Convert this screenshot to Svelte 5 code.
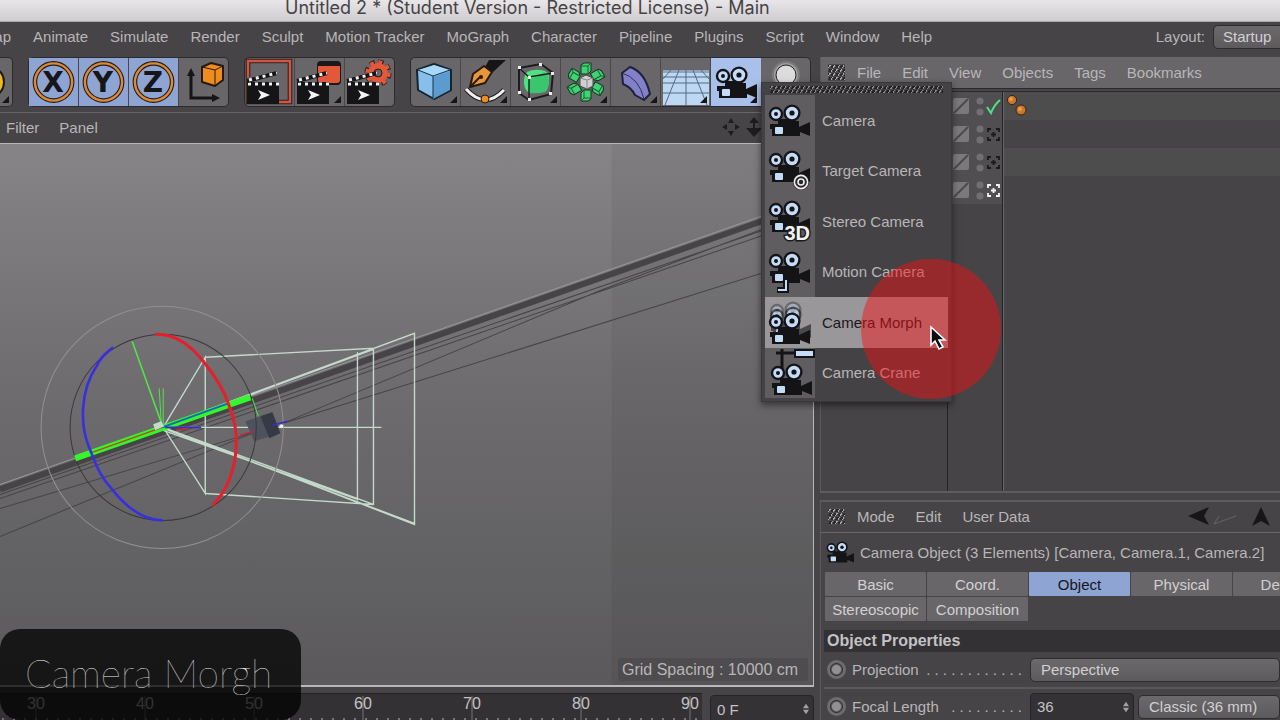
<script>
    const menus = [
        "Snap",
        "Animate",
        "Simulate",
        "Render",
        "Sculpt",
        "Motion Tracker",
        "MoGraph",
        "Character",
        "Pipeline",
        "Plugins",
        "Script",
        "Window",
        "Help",
    ];
    const cameras = [
        { name: "Camera", kind: "plain" },
        { name: "Target Camera", kind: "target" },
        { name: "Stereo Camera", kind: "stereo" },
        { name: "Motion Camera", kind: "motion" },
        { name: "Camera Morph", kind: "morph" },
        { name: "Camera Crane", kind: "crane" },
    ];
    const tabs = [
        "Basic",
        "Coord.",
        "Object",
        "Physical",
        "Details",
        "Stereoscopic",
        "Composition",
    ];
    const rows = ["check", "off", "off", "on"];
    const frames = [30, 40, 50, 60, 70, 80, 90];
    const ticks = Array.from({ length: 64 }, (_, i) => 3 + i * 11);
    const petals = [0, 60, 120, 180, 240, 300];

    let hovered = $state("Camera Morph");
    let activeTab = $state("Object");
    let locked = $state({ X: true, Y: true, Z: true });
    let frame = $state("0 F");
    let focal = $state("36");
</script>

{#snippet reels()}
    <circle cx="8" cy="10" r="6" fill="#c4dcf8" stroke="#141416" stroke-width="2.4" />
    <circle cx="8" cy="10" r="2" fill="#141416" />
    <circle cx="24" cy="9" r="7.4" fill="#c4dcf8" stroke="#141416" stroke-width="2.4" />
    <circle cx="24" cy="9" r="2.6" fill="#141416" />
{/snippet}

{#snippet cameraBody()}
    <path d="M10 15h11v2h10v6l11-5v14l-10-4v4H4v-7H2v-5h8z" fill="#141416" />
    <rect x="7" y="23" width="8" height="7" rx="1" fill="#c4dcf8" />
{/snippet}

{#snippet clapper()}
    <path d="M2 28h32v18H2z" fill="#151517" />
    <path d="M2 26h32" stroke="#151517" stroke-width="4" />
    <path d="M3 26h31" stroke="#f2f2f2" stroke-width="3" stroke-dasharray="3 4" />
    <path d="M2 23l30-8" stroke="#151517" stroke-width="4" />
    <path d="M4 22l28-7" stroke="#f2f2f2" stroke-width="3" stroke-dasharray="3 4" />
    <path d="M13 32l12 5-12 5 3-5z" fill="#f4f4f4" />
{/snippet}

{#snippet corner()}
    <path d="M46 38v7h-7z" fill="#161617" />
{/snippet}

{#snippet spinner()}
    <svg class="spin" viewBox="0 0 8 14" aria-hidden="true">
        <path d="M4 0l4 6H0zM4 14l4-6H0z" fill="#a3a1a3" />
    </svg>
{/snippet}

<div class="app">
    <header class="titlebar">Untitled 2 * (Student Version - Restricted License) - Main</header>

    <nav class="menubar">
        <div class="menus">
            {#each menus as menu}
                <button>{menu}</button>
            {/each}
        </div>
        <label for="layout">Layout:</label>
        <select id="layout">
            <option>Startup</option>
        </select>
    </nav>

    <div class="workspace">
        <main>
            <div class="toolbar">
                <div class="group first">
                    <button aria-label="Recent tool">
                        <svg viewBox="0 0 50 48">
                            <circle cx="25" cy="24" r="16" fill="#f4b81c" stroke="#1b1b1b" stroke-width="2" />
                            {@render corner()}
                        </svg>
                    </button>
                </div>
                <div class="group">
                    {#each ["X", "Y", "Z"] as axis}
                        <button
                            class:active={locked[axis]}
                            aria-label="{axis} axis"
                            onclick={() => (locked[axis] = !locked[axis])}
                        >
                            <svg viewBox="0 0 50 48">
                                <circle cx="24.5" cy="24" r="18.6" fill="none" stroke="#221d1c" stroke-width="4.6" />
                                <circle cx="24.5" cy="24" r="18.6" fill="none" stroke="#dd8836" stroke-width="2.4" />
                                <text x="24" y="34" text-anchor="middle" class="axis">{axis}</text>
                            </svg>
                        </button>
                    {/each}
                    <button aria-label="Coordinate system">
                        <svg viewBox="0 0 50 48">
                            <path d="M12 16v24h24" fill="none" stroke="#151517" stroke-width="3" />
                            <path d="M12 10l4 8H8zM41 40l-8-4v8z" fill="#151517" />
                            <path d="M23 9l9-4 12 3v14l-8 6-13-4z" fill="#f08c1c" stroke="#241a10" stroke-width="2" stroke-linejoin="round" />
                            <path d="M23 9l13 3 8-4M36 12v16" fill="none" stroke="#241a10" />
                        </svg>
                    </button>
                </div>
                <div class="group">
                    <button aria-label="Render view">
                        <svg viewBox="0 0 50 48">
                            <path d="M3 3h42v41H3z" fill="none" stroke="#37201d" stroke-width="4.6" />
                            <path d="M3 3h42v41H3z" fill="none" stroke="#cf5640" stroke-width="2.4" />
                            <path d="M2 19h32v26H2z" fill="#686668" />
                            {@render clapper()}
                        </svg>
                    </button>
                    <button aria-label="Render to picture viewer">
                        <svg viewBox="0 0 50 48">
                            <rect x="22" y="3" width="24" height="24" rx="4" fill="#1b191a" />
                            <path d="M23 8h22v14q0 3-3 3H26q-3 0-3-3z" fill="#e4583a" />
                            {@render clapper()}
                            {@render corner()}
                        </svg>
                    </button>
                    <button aria-label="Render settings">
                        <svg viewBox="0 0 50 48">
                            <circle cx="33" cy="15" r="11" fill="none" stroke="#2a1a17" stroke-width="5" stroke-dasharray="5 3.64" />
                            <circle cx="33" cy="15" r="11" fill="none" stroke="#e4583a" stroke-width="3.4" stroke-dasharray="4 4.64" />
                            <circle cx="33" cy="15" r="7" fill="none" stroke="#e4583a" stroke-width="6" />
                            <circle cx="33" cy="15" r="4" fill="none" stroke="#2a1a17" />
                            {@render clapper()}
                        </svg>
                    </button>
                </div>
                <div class="group">
                    <button aria-label="Cube">
                        <svg viewBox="0 0 50 48">
                            <path d="M6 12l17-6 17 6v20l-17 9-16-9z" fill="#86bfec" stroke="#17232d" stroke-width="2" stroke-linejoin="round" />
                            <path d="M22 19l17-6v19l-17 9z" fill="#5b9bd0" />
                            <path d="M7 12l16-5 16 5-17 6z" fill="#a6d8fa" />
                            <path d="M7 12l15 6 17-6M22 18v22" fill="none" stroke="#1c3040" />
                            {@render corner()}
                        </svg>
                    </button>
                    <button aria-label="Pen">
                        <svg viewBox="0 0 50 48">
                            <path d="M5 31q19 21 38 1" fill="none" stroke="#1c1c1c" stroke-width="5" />
                            <path d="M5 31q19 21 38 1" fill="none" stroke="#f1f1f1" stroke-width="3" />
                            <path d="M28 2h17L32 14l-8-5z" fill="#171516" />
                            <path d="M9 29l3-13 11-8 8 6-7 11z" fill="#e9953a" stroke="#241a10" stroke-width="2" stroke-linejoin="round" />
                            <path d="M9 29l10-10" stroke="#241a10" stroke-width="2" />
                            <circle cx="20" cy="19" r="2" fill="#241a10" />
                            <circle cx="24" cy="41" r="4" fill="#f08c1c" stroke="#241a10" />
                            {@render corner()}
                        </svg>
                    </button>
                    <button aria-label="Subdivision surface">
                        <svg viewBox="0 0 50 48">
                            <path d="M8 10l22-4 12 9-2 21-22 6L8 35z" fill="none" stroke="#1a1d1b" stroke-width="2" />
                            <path d="M16 14q8-4 18-1 5 2 4 10t-3 10q-9 3-18 1-4-3-4-10t3-10z" fill="#4fe283" />
                            <path d="M18 21q9-2 15-7 5 3 5 9t-4 11q-8 2-16 1z" fill="#38c76c" />
                            <path d="M8 10l10 9 24-4M18 19v23" fill="none" stroke="#1a1d1b" stroke-width="1.4" />
                            <path d="M7 8h3v3H7zM28 5h3v3h-3zM40 14h3v3h-3zM17 18h3v3h-3zM17 40h3v3h-3zM7 33h3v3H7zM38 34h3v3h-3z" fill="#ececec" />
                            {@render corner()}
                        </svg>
                    </button>
                    <button aria-label="Array">
                        <svg viewBox="0 0 50 48">
                            {#each petals as angle}
                                <g transform="rotate({angle} 25 24)">
                                    <path d="M20 7l3-2h7v8l-3 3h-7z" fill="#3fd473" stroke="#16321f" stroke-linejoin="round" />
                                    <path d="M20 8h7v8M27 8l3-3" fill="none" stroke="#1f5c37" />
                                </g>
                            {/each}
                            <path d="M19 20l6-3 7 3v8l-6 3-7-3z" fill="#cfcfcf" stroke="#4a4a4a" />
                            <path d="M19 20l7 2 6-2M26 22v9" fill="none" stroke="#8a8a8a" />
                            {@render corner()}
                        </svg>
                    </button>
                    <button aria-label="Bend deformer">
                        <svg viewBox="0 0 50 48">
                            <path d="M11 15l8-6q15 5 20 27l-6 6-9-5q-4-8-12-11z" fill="#8280c8" stroke="#20203c" stroke-width="2" stroke-linejoin="round" />
                            <path d="M11 15q17 5 22 26" fill="none" stroke="#30305c" />
                            {@render corner()}
                        </svg>
                    </button>
                    <button aria-label="Floor">
                        <svg viewBox="0 0 50 48">
                            <path d="M2 12h46v35H2z" fill="#bcd8f4" />
                            <path d="M2 12h46v3H2z" fill="#8ea7c0" />
                            <path d="M2 19h46M2 25h46M2 35h46M25 12v35M18 12L4 47M32 12l14 35M10 12L2 21M40 12l8 9" fill="none" stroke="#56687c" />
                            {@render corner()}
                        </svg>
                    </button>
                    <div class="anchor">
                        <button class="active" aria-label="Camera">
                            <svg viewBox="0 0 50 48">
                                <g transform="translate(4 8)">
                                    {@render cameraBody()}
                                    {@render reels()}
                                </g>
                                {@render corner()}
                            </svg>
                        </button>

                        <div class="popup">
                            <div class="grip"></div>
                            <div class="items">
                                {#each cameras as cam}
                                    <button
                                        class:hovered={hovered === cam.name}
                                        onmouseenter={() => (hovered = cam.name)}
                                    >
                                        <svg viewBox="0 0 50 50" aria-hidden="true">
                                            {#if cam.kind === "morph"}
                                                <g transform="translate(4 4)" opacity="0.35">{@render reels()}</g>
                                                <g transform="translate(4 9)" opacity="0.6">
                                                    {@render cameraBody()}
                                                    {@render reels()}
                                                </g>
                                            {/if}
                                            {#if cam.kind === "crane"}
                                                <path d="M11 5h20M17 1v20" stroke="#141416" stroke-width="3" />
                                                <rect x="30" y="2" width="19" height="7" fill="#c4dcf8" stroke="#141416" stroke-width="2" />
                                            {/if}
                                            <g transform={cam.kind === "morph" ? "translate(3 15)" : cam.kind === "crane" ? "translate(5 15)" : cam.kind === "plain" ? "translate(3 9)" : "translate(3 4)"}>
                                                {@render cameraBody()}
                                                {@render reels()}
                                            </g>
                                            {#if cam.kind === "target"}
                                                <circle cx="36" cy="36" r="8" fill="#29282a" />
                                                <circle cx="36" cy="36" r="6.6" fill="none" stroke="#eee" stroke-width="1.6" />
                                                <circle cx="36" cy="36" r="3" fill="none" stroke="#eee" stroke-width="1.6" />
                                            {:else if cam.kind === "stereo"}
                                                <text x="45" y="44" text-anchor="end" class="stereo">3D</text>
                                            {:else if cam.kind === "motion"}
                                                <path d="M21 34v9h-9" fill="none" stroke="#141416" stroke-width="6" />
                                                <path d="M21 33v10h-8" fill="none" stroke="#c4dcf8" stroke-width="2" />
                                            {/if}
                                        </svg>
                                        {cam.name}
                                    </button>
                                {/each}
                            </div>
                            <div class="spot"></div>
                            <svg class="cursor" viewBox="0 0 18 26" aria-hidden="true">
                                <path d="M2 2v18l4-4 4 8 4-2-4-7h6z" fill="#0c0c0c" stroke="#fff" stroke-width="1.6" />
                            </svg>
                        </div>
                    </div>
                    <button aria-label="Light">
                        <svg viewBox="0 0 50 48">
                            <circle cx="25" cy="17" r="14" fill="#7c7a7c" />
                            <circle cx="25" cy="17" r="12" fill="#a09ea0" />
                            <circle cx="25" cy="17" r="10" fill="#dcdcdc" stroke="#262626" />
                        </svg>
                    </button>
                </div>
            </div>

            <div class="viewmenu">
                <button>Filter</button>
                <button>Panel</button>
                <svg viewBox="0 0 90 20" aria-hidden="true">
                    <path d="M9 1l3 5H6zM9 19l3-5H6zM0 10l5-3v6zM18 10l-5-3v6zM32 0l5 6h-4v5h7l-8 9-8-9h7V6h-4z" fill="#1d1c1e" />
                </svg>
            </div>

            <div class="viewport">
                <svg class="scene" viewBox="0 144 812 541" preserveAspectRatio="xMinYMin slice" aria-hidden="true">
                    <path d="M611 144h400v600H611z" fill="#000" opacity="0.05" />
                    <g fill="none" stroke="#464447">
                        <path d="M0 489L812 203" stroke-width="6" />
                        <path d="M0 484L812 198" stroke="#9a989a" />
                        <path d="M0 494L812 213M0 498L812 218M0 508L254 432M0 536L254 432M280 424L812 257M280 424L600 290 812 210" />
                    </g>
                    <g fill="none" stroke="#c3dacb" stroke-width="1.4">
                        <path d="M163 427L205 357V493z" />
                        <path d="M205 357l168-9v156l-168-11M163 426L414 333V524L163 427M357 352v148M163 430l194 69M163 427l210 77M163 428L414 523M163 427L373 349" />
                        <path d="M163 427h218" />
                    </g>
                    <path d="M245 421l27-9 8 21-26 8z" fill="#4d525c" />
                    <path d="M260 416l12-4 8 21-11 5z" fill="#363a44" />
                    <circle cx="162" cy="427" r="121" fill="none" stroke="#929092" />
                    <circle cx="163" cy="427" r="93" fill="none" stroke="#3a383a" />
                    <g fill="none">
                        <path d="M252 398l6 18M159 388l2 34M163 388v36" stroke="#52e34c" />
                        <path d="M132 341l30 84" stroke="#52e34c" stroke-width="1.6" />
                        <path d="M75 458L250 397" stroke="#35f52d" stroke-width="6" />
                        <path d="M92 452l70-25" stroke="#b9491d" stroke-width="1.4" />
                        <path d="M162 427l66-24" stroke="#1868b4" stroke-width="2" />
                        <path d="M165 427h36M272 425l15-4" stroke="#3830c0" stroke-width="1.6" />
                        <path d="M176 429h12M240 435l14-4" stroke="#b52a3c" stroke-width="1.6" />
                        <path d="M155 334C176 333 192 347 203 361C215 376 223 388 228 403C234 418 237 430 236 445C235 470 226 492 212 505" stroke="#e5202c" stroke-width="3" />
                        <path d="M113 347C104 354 100 358 97 365C88 378 84 392 83 408C82 426 85 438 91 452C97 468 102 478 112 489C127 508 143 520 163 520" stroke="#3830e0" stroke-width="2.6" />
                    </g>
                    <path d="M153 424l8-3 3 5-9 4z" fill="#c3dacb" />
                    <circle cx="281" cy="426" r="2" fill="#e6efe9" />
                </svg>
                <div class="spacing">Grid Spacing : 10000 cm</div>
            </div>

            <div class="timeline">
                <svg class="ruler" aria-hidden="true">
                    {#each frames as value, i}
                        <path d="M{36 + i * 109} 2v26" stroke="#777577" />
                        <text x={36 + i * 109} y="15" text-anchor="middle">{value}</text>
                    {/each}
                    {#each ticks as x}
                        <path d="M{x} 24v4" stroke="#bbb9bb" />
                    {/each}
                </svg>
                <div class="field">
                    <input bind:value={frame} aria-label="Current frame" />
                    {@render spinner()}
                </div>
            </div>
        </main>

        <aside>
            <section class="objects">
                <div class="bar light">
                    <span class="dots"></span>
                    {#each ["File", "Edit", "View", "Objects", "Tags", "Bookmarks"] as item}
                        <button>{item}</button>
                    {/each}
                </div>
                <div class="tree">
                    <div class="names"></div>
                    <div class="flags">
                        {#each rows as flag}
                            <div class="row">
                                <svg viewBox="0 0 54 28" aria-hidden="true">
                                    <rect x="5" y="6" width="16" height="16" rx="2" fill="#7b797b" />
                                    <path d="M6 21L20 7" stroke="#4c4a4c" stroke-width="2" />
                                    <circle cx="32" cy="9" r="3.6" fill="#716f71" />
                                    <circle cx="32" cy="20" r="3.6" fill="#716f71" />
                                    {#if flag === "check"}
                                        <path d="M39 15l4 6q3-8 9-13" fill="none" stroke="#4fe283" stroke-width="2" />
                                    {:else}
                                        <path
                                            d="M40 12V9h3M48 9h3v3M51 17v3h-3M43 20h-3v-3M45.500 12v5M43 14.500h5"
                                            fill="none"
                                            stroke={flag === "on" ? "#f4f4f4" : "#1b1a1c"}
                                            stroke-width="1.8"
                                        />
                                    {/if}
                                </svg>
                            </div>
                        {/each}
                    </div>
                    <div class="tags">
                        {#each rows as flag}
                            <div class="row">
                                {#if flag === "check"}
                                    <svg viewBox="0 0 54 28" aria-hidden="true">
                                        <circle cx="8" cy="8" r="4.600" fill="#c8782c" stroke="#3c2410" />
                                        <circle cx="17" cy="18" r="5" fill="#c8782c" stroke="#3c2410" />
                                        <circle cx="7" cy="7" r="2" fill="#ea9c50" />
                                        <circle cx="16" cy="17" r="2" fill="#ea9c50" />
                                    </svg>
                                {/if}
                            </div>
                        {/each}
                    </div>
                </div>
            </section>

            <section class="attributes">
                <div class="bar">
                    <span class="dots"></span>
                    {#each ["Mode", "Edit", "User Data"] as item}
                        <button>{item}</button>
                    {/each}
                    <svg viewBox="0 0 92 22" aria-hidden="true">
                        <path d="M0 10L21 1l-5 9 5 9z" fill="#161517" />
                        <path d="M48 10L26 18l5-8" fill="none" stroke="#666466" />
                        <path d="M73 1l9 19-9-5-9 5z" fill="#161517" />
                    </svg>
                </div>
                <div class="heading">
                    <svg viewBox="0 0 42 34" aria-hidden="true">
                        {@render cameraBody()}
                        {@render reels()}
                    </svg>
                    Camera Object (3 Elements) [Camera, Camera.1, Camera.2]
                </div>
                <div class="tabs">
                    {#each tabs as tab}
                        <button class:active={activeTab === tab} onclick={() => (activeTab = tab)}>
                            {tab}
                        </button>
                    {/each}
                </div>
                <h2>Object Properties</h2>
                <div class="prop">
                    <input type="radio" aria-label="Animate projection" />
                    <label for="projection">Projection</label>
                    <span class="leader">. . . . . . . . . . . .</span>
                    <select id="projection">
                        <option>Perspective</option>
                    </select>
                </div>
                <div class="prop">
                    <input type="radio" aria-label="Animate focal length" />
                    <label for="focal">Focal Length</label>
                    <span class="leader">. . . . . . . . .</span>
                    <div class="field">
                        <input id="focal" bind:value={focal} />
                        {@render spinner()}
                    </div>
                    <select aria-label="Lens preset">
                        <option>Classic (36 mm)</option>
                    </select>
                </div>
            </section>
        </aside>
    </div>

    <div class="caption">Camera Morgh</div>
</div>

<style>
    :global(body) {
        margin: 0;
        background: #464446;
    }

    .app {
        position: relative;
        display: flex;
        flex-direction: column;
        height: 100vh;
        overflow: hidden;
        background: #464446;
        color: #b8b6b8;
        font-family: "Liberation Sans", Arial, sans-serif;
        font-size: 15px;
    }

    .app * {
        box-sizing: border-box;
    }

    button,
    select,
    input {
        font: inherit;
        color: inherit;
        background: none;
        border: none;
        padding: 0;
        margin: 0;
        white-space: nowrap;
    }

    svg {
        display: block;
        flex-shrink: 0;
    }

    .titlebar {
        height: 22px;
        padding-left: 285px;
        background: linear-gradient(#e8e6e8, #cfcdcf);
        border-bottom: 1px solid #a9a7a9;
        color: #454345;
        font-family: Inter, sans-serif;
        font-size: 18px;
        line-height: 15px;
        white-space: nowrap;
    }

    .menubar {
        display: flex;
        align-items: center;
        height: 35px;
        padding-bottom: 6px;
        flex-shrink: 0;
    }

    .menus {
        display: flex;
        flex: 1;
        gap: 22px;
        margin-left: -24px;
    }

    select {
        appearance: none;
        height: 24px;
        padding: 0 10px;
        border: 1px solid #2e2c2e;
        border-radius: 5px;
        background: linear-gradient(#6b696b, #5c5a5c);
        color: #d2d0d2;
    }

    .menubar select {
        width: 72px;
        margin-left: 8px;
        margin-right: -5px;
        padding: 0 9px;
    }

    .workspace {
        display: grid;
        grid-template-columns: minmax(0, 1fr) 460px;
        gap: 6px;
        flex: 1;
        min-height: 0;
    }

    main,
    aside {
        display: flex;
        flex-direction: column;
        min-width: 0;
        min-height: 0;
    }

    .toolbar {
        display: flex;
        gap: 15px;
        height: 56px;
        flex-shrink: 0;
        border-bottom: 1px solid #686668;
    }

    .group {
        display: flex;
        height: 50px;
        border: 1px solid #2c2a2c;
        border-radius: 5px;
        background: #686668;
    }

    .group button {
        height: 48px;
    }

    .group > button,
    .anchor {
        width: 50px;
        border-right: 1px solid #4a484a;
    }

    .group > button:last-child {
        width: 49px;
        border-right: none;
    }

    .group svg {
        width: 50px;
        height: 48px;
    }

    .group button.active {
        background: #8ea4d2;
    }

    .first {
        width: 13px;
        justify-content: flex-end;
        overflow: hidden;
        border-left: none;
        border-radius: 0 5px 5px 0;
    }

    .first button {
        flex-shrink: 0;
    }

    .axis {
        font: bold 28px "DejaVu Sans", sans-serif;
        fill: #161517;
    }

    .anchor {
        position: relative;
    }

    .group .anchor > .active {
        background: #a9c1ea;
    }

    .popup {
        position: absolute;
        z-index: 2;
        top: 24px;
        left: 50px;
        width: 191px;
        padding: 2px 3px 3px;
        background: #444244;
        border: 1px solid #3a383a;
        box-shadow: 0 3px 7px rgba(0, 0, 0, 0.5);
    }

    .grip {
        height: 8px;
        margin: 0 5px 2px;
        background:
            repeating-linear-gradient(#444244 0 1px, transparent 1px 4px),
            repeating-linear-gradient(120deg, #222 0 2px, #8b898b 2px 3px, #444244 3px 4px);
    }

    .items {
        display: grid;
        grid-auto-rows: 1fr;
        height: 303px;
        background: linear-gradient(90deg, #5f5d60 50px, transparent 50px);
    }

    .items button {
        display: flex;
        align-items: center;
        gap: 7px;
        height: auto;
        text-align: left;
    }

    .items svg {
        width: 50px;
        height: 50px;
    }

    .items .hovered {
        background: #9a979a;
        color: #1a181a;
    }

    .stereo {
        font: bold 20px "Liberation Sans", sans-serif;
        fill: #f4f4f4;
        stroke: #1b1a1c;
        stroke-width: 3px;
        paint-order: stroke;
    }

    .spot {
        position: absolute;
        top: 176px;
        left: 99px;
        width: 140px;
        height: 140px;
        border-radius: 50%;
        background: rgba(248, 14, 18, 0.46);
        pointer-events: none;
    }

    .popup .cursor {
        position: absolute;
        top: 242px;
        left: 167px;
        width: 18px;
        height: 26px;
        pointer-events: none;
    }

    .viewmenu {
        display: flex;
        align-items: center;
        gap: 20px;
        height: 30px;
        padding-left: 6px;
        padding-bottom: 2px;
        flex-shrink: 0;
    }

    .viewmenu svg {
        width: 90px;
        height: 20px;
        margin-left: auto;
        margin-right: 2px;
    }

    .viewport {
        position: relative;
        flex: 1;
        min-height: 0;
        overflow: hidden;
        border: 1px solid #b9b7b9;
        border-left: none;
        border-bottom-width: 2px;
        background: linear-gradient(#868487, #6e6c6f 45%, #616062 80%, #5b595c);
    }

    .scene {
        width: 100%;
        height: 100%;
    }

    .spacing {
        position: absolute;
        right: 5px;
        bottom: 4px;
        width: 190px;
        height: 23px;
        padding-left: 4px;
        border-radius: 3px;
        background: #4e4c4e;
        font-size: 16px;
        line-height: 23px;
    }

    .timeline {
        display: flex;
        gap: 8px;
        height: 33px;
        padding-top: 6px;
        flex-shrink: 0;
    }

    .ruler {
        flex: 1;
        min-width: 0;
        height: 28px;
        background: #333134;
        border-top: 1px solid #242224;
    }

    .ruler text {
        fill: #c4c2c4;
        font-size: 16px;
    }

    .field {
        display: flex;
        align-items: center;
        width: 104px;
        height: 28px;
        padding: 0 4px 0 6px;
        border: 1px solid #262426;
        border-radius: 4px 4px 0 0;
        background: #343235;
        color: #c4c2c4;
    }

    .timeline .field {
        margin-top: 2px;
    }

    .field input {
        flex: 1;
        min-width: 0;
    }

    .spin {
        width: 6px;
        height: 12px;
    }

    .bar {
        display: flex;
        align-items: center;
        gap: 21px;
        height: 31px;
        padding-left: 7px;
        flex-shrink: 0;
    }

    .bar.light {
        background: #686668;
    }

    .dots {
        width: 17px;
        height: 17px;
        margin-right: -9px;
        background:
            repeating-linear-gradient(#4c4a4c 0 1px, transparent 1px 4px),
            repeating-linear-gradient(120deg, #2c2a2c 0 2px, #aaa8aa 2px 3px, #4c4a4c 3px 4px);
    }

    .objects {
        display: flex;
        flex-direction: column;
        flex: 1;
        min-height: 0;
        margin-bottom: 7px;
        border-left: 1px solid #5c5a5c;
        border-bottom: 2px solid #5e5c5e;
    }

    .tree {
        display: grid;
        grid-template-columns: 127px 55px 1fr;
        flex: 1;
        border-top: 4px double #2c2a2c;
    }

    .names,
    .flags {
        border-right: 1px solid #242224;
    }

    .tags {
        border-left: 1px solid #686668;
    }

    .row {
        height: 28px;
    }

    .row svg {
        width: 54px;
        height: 28px;
    }

    .row:nth-child(odd) {
        background: #4d4d4d;
    }

    .flags .row {
        background: #504e50;
    }

    .attributes {
        display: flex;
        flex-direction: column;
        height: 220px;
        flex-shrink: 0;
        border-top: 2px solid #5c5a5c;
        border-left: 1px solid #5c5a5c;
        overflow: hidden;
    }

    .attributes .bar {
        padding-bottom: 1px;
        border-bottom: 1px solid #686668;
    }

    .bar svg {
        width: 92px;
        height: 22px;
        margin-left: auto;
    }

    .heading {
        display: flex;
        align-items: center;
        gap: 6px;
        height: 39px;
        padding-left: 5px;
        flex-shrink: 0;
        white-space: nowrap;
    }

    .heading svg {
        width: 28px;
        height: 23px;
    }

    .tabs {
        display: grid;
        grid-template-columns: repeat(5, 101px);
        grid-auto-rows: 24px;
        gap: 1px;
        padding-left: 4px;
        flex-shrink: 0;
        color: #d2d0d2;
    }

    .tabs button {
        background: #686668;
        border-radius: 1px;
    }

    .tabs .active {
        background: #8ea4d2;
        color: #17161c;
    }

    h2 {
        height: 22px;
        margin: 9px 0 0 3px;
        padding-left: 3px;
        flex-shrink: 0;
        background: #333134;
        color: #c4c2c4;
        font-size: 16px;
        line-height: 22px;
    }

    .prop {
        display: flex;
        align-items: center;
        height: 37px;
        flex-shrink: 0;
        padding-left: 3px;
        margin-left: 3px;
        border-bottom: 2px solid #5a585a;
    }

    input[type="radio"] {
        appearance: none;
        flex-shrink: 0;
        width: 19px;
        height: 19px;
        margin-right: 6px;
        border: 3px solid #6e6c6e;
        border-radius: 50%;
        background: radial-gradient(#929092 4px, #2c2a2c 6px);
    }

    .leader {
        margin-left: auto;
        margin-right: 8px;
        white-space: nowrap;
    }

    .prop select {
        width: 250px;
    }

    .prop .field + select {
        width: 142px;
        margin-left: 4px;
    }

    .caption {
        position: absolute;
        z-index: 3;
        left: 0;
        bottom: 0;
        width: 301px;
        height: 91px;
        padding-left: 25px;
        border-radius: 20px;
        background: rgba(0, 0, 0, 0.75);
        color: #f0f0f0;
        font-family: Lato, sans-serif;
        font-size: 39px;
        font-weight: 100;
        line-height: 88px;
        white-space: nowrap;
    }
</style>
